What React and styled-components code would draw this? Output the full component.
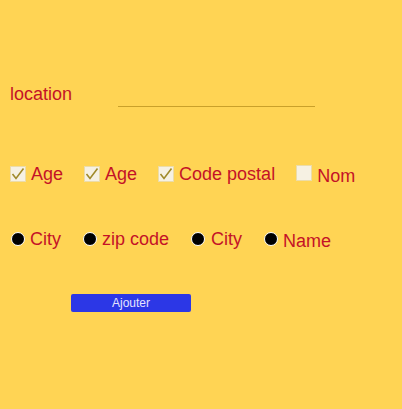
import React from 'react';
import styled, { createGlobalStyle } from 'styled-components';

const GlobalStyle = createGlobalStyle`
  html, body {
    margin: 0;
    padding: 0;
    background: #ffd454;
  }
  body {
    font-family: "Liberation Sans", Arial, sans-serif;
  }
`

const Page = styled.main`
  width: 402px;
  height: 409px;
  box-sizing: border-box;
  padding: 83px 0 0 10px;
  color: #c41227;
  font-size: 18px;
`

const LocationRow = styled.div`
  display: flex;
  align-items: flex-end;
  height: 24px;
`

const Label = styled.span`
  line-height: 22px;
  align-self: flex-start;
`

const Line = styled.div`
  width: 197px;
  height: 1px;
  margin: 0 0 0 46px;
  background: #c9a02a;
`

const Row = styled.div`
  display: flex;
  align-items: center;
  gap: ${p => p.$gap}px;
  margin-top: ${p => p.$top}px;
  height: 22px;
`

const Item = styled.label`
  display: flex;
  align-items: center;
  gap: ${p => p.$gap || 5}px;
`

const Text = styled.span`
  line-height: 22px;
  position: relative;
  top: ${p => p.$shift || 0}px;
`

const Box = styled.span`
  width: 16px;
  height: 16px;
  box-sizing: border-box;
  background: #f6f1e3;
  border: 1px solid #ecdca8;
  display: flex;
  align-items: center;
  justify-content: center;
  position: relative;
  top: ${p => p.$shift || 0}px;
`

const Dot = styled.span`
  width: 14px;
  height: 14px;
  box-sizing: border-box;
  border-radius: 50%;
  background: #000;
  border: 1.5px solid #fff;
  margin-left: 1px;
`

const Button = styled.button`
  margin: 44px 0 0 61px;
  width: 120px;
  height: 18px;
  padding: 0;
  border: none;
  border-radius: 2px;
  background: #2c37e6;
  color: #e4e4ff;
  font-family: "Liberation Sans", Arial, sans-serif;
  font-size: 12px;
  display: block;
`

const Check = ({ checked, shift }) => (
  <Box $shift={shift}>
    {checked && (
      <svg width="14" height="14" viewBox="0 0 14 14">
        <path d="M1.5 7 L5 11.5 L12.5 1.5" fill="none" stroke="#a08a2a" strokeWidth="1.6" />
      </svg>
    )}
  </Box>
)

const App = () => {
  const checks = [
    { label: 'Age', checked: true },
    { label: 'Age', checked: true },
    { label: 'Code postal', checked: true },
    { label: 'Nom', checked: false, shift: 2 },
  ]
  const radios = [
    { label: 'City', gap: 5 },
    { label: 'zip code', gap: 5 },
    { label: 'City', gap: 6 },
    { label: 'Name', gap: 5, shift: 2 },
  ]
  return (
    <>
      <GlobalStyle />
      <Page>
        <LocationRow>
          <Label>location</Label>
          <Line />
        </LocationRow>
        <Row $top={56} $gap={21}>
          {checks.map((c, i) => (
            <Item key={i}>
              <Check checked={c.checked} shift={c.shift ? -1 : 0} />
              <Text $shift={c.shift}>{c.label}</Text>
            </Item>
          ))}
        </Row>
        <Row $top={43} $gap={21}>
          {radios.map((r, i) => (
            <Item key={i} $gap={r.gap}>
              <Dot />
              <Text $shift={r.shift}>{r.label}</Text>
            </Item>
          ))}
        </Row>
        <Button>Ajouter</Button>
      </Page>
    </>
  );
}

export default App
